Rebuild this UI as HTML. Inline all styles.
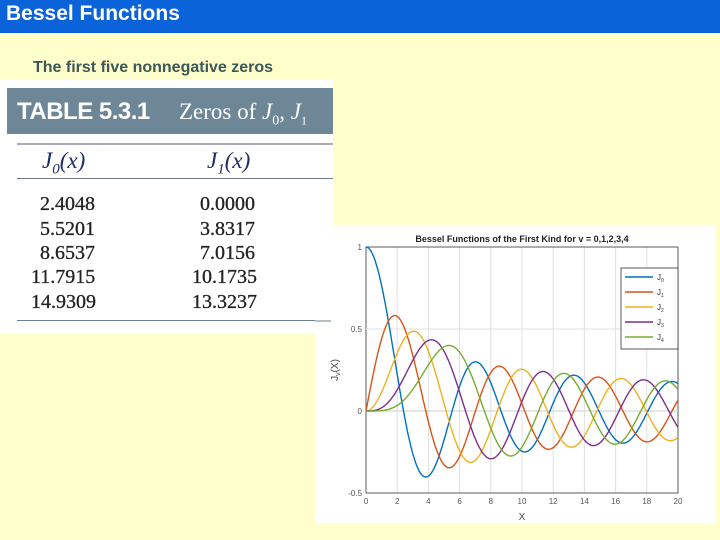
<!DOCTYPE html>
<html><head><style>
body{margin:0;width:720px;height:540px;background:#ffffcc;position:relative;overflow:hidden;font-family:"Liberation Sans",sans-serif}
.bar{position:absolute;left:0;top:0;width:720px;height:33px;background:#0b63d9;color:#fff;font-size:21px;font-weight:bold;line-height:28px;padding-left:6px;box-sizing:border-box}
.sub{position:absolute;left:33px;top:59px;font-size:16px;font-weight:bold;color:#3b5757}
.tbl{position:absolute;left:0;top:80px;width:333px;height:253px;background:#fff}
.hd{position:absolute;left:7px;top:8px;width:326px;height:46px;background:#6d8796;color:#fff}
.hd .a{position:absolute;left:10px;top:10px;font-size:24px;font-weight:bold;letter-spacing:-0.5px}
.hd .b{position:absolute;left:172px;top:11px;font-family:"Liberation Serif",serif;font-size:23px}
.ln{position:absolute;left:17px;width:316px;height:1px;background:#6c7f8a}
.c{position:absolute;font-family:"Liberation Serif",serif;font-size:20px;color:#222;-webkit-text-stroke:0.3px #222}
.j{position:absolute;font-family:"Liberation Serif",serif;font-style:italic;font-size:23px;color:#1c2b6a}
</style></head><body>
<div class="bar">Bessel Functions</div>
<div class="sub">The first five nonnegative zeros</div>
<div class="tbl">
 <div class="hd"><span class="a">TABLE 5.3.1</span><span class="b">Zeros of <i>J</i><sub style="font-size:14px">0</sub>, <i>J</i><sub style="font-size:12px">1</sub></span></div>
 <div class="ln" style="top:63px;height:2px;background:#aab"></div>
 <div class="j" style="left:42px;top:68px">J<sub style="font-size:15px">0</sub>(x)</div>
 <div class="j" style="left:207px;top:68px">J<sub style="font-size:15px">1</sub>(x)</div>
 <div class="ln" style="top:98px"></div>
 <div class="c" style="left:40px;top:112px;line-height:24.5px">2.4048<br>5.5201<br>8.6537</div>
 <div class="c" style="left:31px;top:185px;line-height:24.5px">11.7915<br>14.9309</div>
 <div class="c" style="left:200px;top:112px;line-height:24.5px">0.0000<br>3.8317<br>7.0156</div>
 <div class="c" style="left:192px;top:185px;line-height:24.5px">10.1735<br>13.3237</div>
 <div class="ln" style="top:240px"></div>
</div>
<svg style="position:absolute;left:315px;top:225px" width="401" height="298" viewBox="315 225 401 298" id="p">
<rect x="315" y="225" width="401" height="298" fill="#fff"/>
<line x1="315" y1="321" x2="331" y2="321" stroke="#6c7f8a"/>
<g id="grid" stroke="#e0e0e0" stroke-width="1"></g>
<rect x="366" y="247" width="312" height="246" fill="none" stroke="#333" stroke-width="0.8"/>
<line x1="366" y1="411" x2="678" y2="411" stroke="#ccc"/>
<line x1="366" y1="329" x2="678" y2="329" stroke="#e0e0e0"/>
<g id="curves" fill="none" stroke-width="1.4"></g>
<text x="522" y="242" font-size="9" font-weight="bold" text-anchor="middle" font-family="Liberation Sans" fill="#222">Bessel Functions of the First Kind for v = 0,1,2,3,4</text>
<g font-size="8" fill="#555" font-family="Liberation Sans" text-anchor="end"><text x="362" y="250">1</text><text x="362" y="332">0.5</text><text x="362" y="414">0</text><text x="362" y="496">-0.5</text></g>
<g id="xt" font-size="8" fill="#555" font-family="Liberation Sans" text-anchor="middle"></g>
<text x="522" y="520" font-size="10" fill="#444" text-anchor="middle" font-family="Liberation Sans">X</text>
<text x="338" y="370" font-size="10" fill="#444" font-family="Liberation Sans" transform="rotate(-90 338 370)" text-anchor="middle">J<tspan font-size="7" dy="2">v</tspan><tspan dy="-2">(X)</tspan></text>
<rect x="621" y="268" width="57" height="81" fill="#fff" stroke="#333" stroke-width="0.8"/>
<g id="leg"></g>
</svg>
<script>
var cols=["#0072bd","#d95319","#edb120","#7e2f8e","#77ac30"];
function J(n,x){var s=0,N=200;for(var i=0;i<=N;i++){var t=Math.PI*i/N,w=(i==0||i==N)?0.5:1;s+=w*Math.cos(n*t-x*Math.sin(t));}return s/N;}
var ns="http://www.w3.org/2000/svg";
function el(t,a,p){var e=document.createElementNS(ns,t);for(var k in a)e.setAttribute(k,a[k]);document.getElementById(p).appendChild(e);return e;}
for(var i=2;i<=18;i+=2){var X=366+i*15.6;el("line",{x1:X,y1:247,x2:X,y2:493},"grid");}
for(var i=0;i<=20;i+=2){var t=el("text",{x:366+i*15.6,y:504},"xt");t.textContent=i;}
for(var n=0;n<5;n++){var pts=[];for(var k=0;k<=400;k++){var x=k*20/400;pts.push((366+x*15.6).toFixed(1)+","+(411-164*J(n,x)).toFixed(1));}
el("polyline",{points:pts.join(" "),stroke:cols[n]},"curves");
var y=277+n*15;el("line",{x1:625,y1:y,x2:653,y2:y,stroke:cols[n],"stroke-width":1.5},"leg");
var t=el("text",{x:657,y:y+3,"font-size":8,fill:"#333","font-family":"Liberation Sans"},"leg");t.textContent="J";var s=el("tspan",{"font-size":5,dy:2},"leg");s.textContent=n;t.appendChild(s);}
</script>
</body></html>
